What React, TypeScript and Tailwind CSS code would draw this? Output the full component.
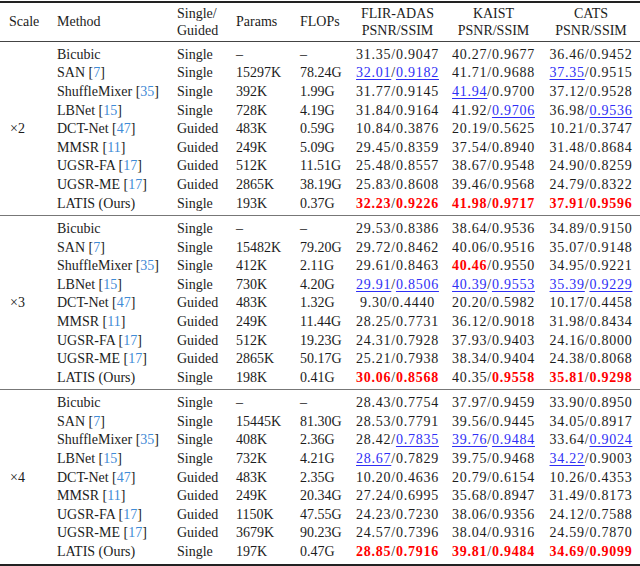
type Row = [string, string, string, string, string, string, string, string];

interface Group {
  scale: string;
  rows: Row[];
}

// metric cell markup: "*" = best (red bold), "_" = second best (blue underline)
const groups: Group[] = [
  {
    scale: '×2',
    rows: [
      ['Bicubic', '', 'Single', '–', '–', '31.35/0.9047', '40.27/0.9677', '36.46/0.9452'],
      ['SAN', '7', 'Single', '15297K', '78.24G', '_32.01/_0.9182', '41.71/0.9688', '_37.35/0.9515'],
      ['ShuffleMixer', '35', 'Single', '392K', '1.99G', '31.77/0.9145', '_41.94/0.9700', '37.12/0.9528'],
      ['LBNet', '15', 'Single', '728K', '4.19G', '31.84/0.9164', '41.92/_0.9706', '36.98/_0.9536'],
      ['DCT-Net', '47', 'Guided', '483K', '0.59G', '10.84/0.3876', '20.19/0.5625', '10.21/0.3747'],
      ['MMSR', '11', 'Guided', '249K', '5.09G', '29.45/0.8359', '37.54/0.8940', '31.48/0.8684'],
      ['UGSR-FA', '17', 'Guided', '512K', '11.51G', '25.48/0.8557', '38.67/0.9548', '24.90/0.8259'],
      ['UGSR-ME', '17', 'Guided', '2865K', '38.19G', '25.83/0.8608', '39.46/0.9568', '24.79/0.8322'],
      ['LATIS (Ours)', '', 'Single', '193K', '0.37G', '*32.23/*0.9226', '*41.98/*0.9717', '*37.91/*0.9596'],
    ],
  },
  {
    scale: '×3',
    rows: [
      ['Bicubic', '', 'Single', '–', '–', '29.53/0.8386', '38.64/0.9536', '34.89/0.9150'],
      ['SAN', '7', 'Single', '15482K', '79.20G', '29.72/0.8462', '40.06/0.9516', '35.07/0.9148'],
      ['ShuffleMixer', '35', 'Single', '412K', '2.11G', '29.61/0.8463', '*40.46/0.9550', '34.95/0.9221'],
      ['LBNet', '15', 'Single', '730K', '4.20G', '_29.91/_0.8506', '_40.39/_0.9553', '_35.39/_0.9229'],
      ['DCT-Net', '47', 'Guided', '483K', '1.32G', '9.30/0.4440', '20.20/0.5982', '10.17/0.4458'],
      ['MMSR', '11', 'Guided', '249K', '11.44G', '28.25/0.7731', '36.12/0.9018', '31.98/0.8434'],
      ['UGSR-FA', '17', 'Guided', '512K', '19.23G', '24.31/0.7928', '37.93/0.9403', '24.16/0.8000'],
      ['UGSR-ME', '17', 'Guided', '2865K', '50.17G', '25.21/0.7938', '38.34/0.9404', '24.38/0.8068'],
      ['LATIS (Ours)', '', 'Single', '198K', '0.41G', '*30.06/*0.8568', '40.35/*0.9558', '*35.81/*0.9298'],
    ],
  },
  {
    scale: '×4',
    rows: [
      ['Bicubic', '', 'Single', '–', '–', '28.43/0.7754', '37.97/0.9459', '33.90/0.8950'],
      ['SAN', '7', 'Single', '15445K', '81.30G', '28.53/0.7791', '39.56/0.9445', '34.05/0.8917'],
      ['ShuffleMixer', '35', 'Single', '408K', '2.36G', '28.42/_0.7835', '_39.76/_0.9484', '33.64/_0.9024'],
      ['LBNet', '15', 'Single', '732K', '4.21G', '_28.67/0.7829', '39.75/0.9468', '_34.22/0.9003'],
      ['DCT-Net', '47', 'Guided', '483K', '2.35G', '10.20/0.4636', '20.79/0.6154', '10.26/0.4353'],
      ['MMSR', '11', 'Guided', '249K', '20.34G', '27.24/0.6995', '35.68/0.8947', '31.49/0.8173'],
      ['UGSR-FA', '17', 'Guided', '1150K', '47.55G', '24.23/0.7230', '38.06/0.9356', '24.12/0.7588'],
      ['UGSR-ME', '17', 'Guided', '3679K', '90.23G', '24.57/0.7396', '38.04/0.9316', '24.59/0.7870'],
      ['LATIS (Ours)', '', 'Single', '197K', '0.47G', '*28.85/*0.7916', '*39.81/*0.9484', '*34.69/*0.9099'],
    ],
  },
];

function Num({ value }: { value: string }) {
  if (value.startsWith('*')) {
    return <span className="font-bold text-[#ff0000]">{value.slice(1)}</span>;
  }
  if (value.startsWith('_')) {
    return <span className="text-[#2f2ff5] underline decoration-1 underline-offset-2">{value.slice(1)}</span>;
  }
  return <span>{value}</span>;
}

function Metric({ value }: { value: string }) {
  const [psnr, ssim] = value.split('/');
  return (
    <div className="flex justify-center tracking-[0.75px]">
      <Num value={psnr} />
      <span>/</span>
      <Num value={ssim} />
    </div>
  );
}

function TableRow({ row }: { row: Row }) {
  const [method, cite, kind, params, flops, flir, kaist, cats] = row;
  return (
    <div className="flex h-[18.6px] items-center">
      <div className="w-[120px] whitespace-nowrap">
        {method}
        {cite ? (
          <>
            {' '}[<span className="text-[#3f8bd6]">{cite}</span>]
          </>
        ) : null}
      </div>
      <div className="w-[59px]">{kind}</div>
      <div className="w-[64px]">{params}</div>
      <div className="w-[50px]">{flops}</div>
      <div className="w-[95px]">
        <Metric value={flir} />
      </div>
      <div className="w-[97px]">
        <Metric value={kaist} />
      </div>
      <div className="w-[98px]">
        <Metric value={cats} />
      </div>
    </div>
  );
}

export default function App() {
  return (
    <div className="w-[640px] h-[566px] bg-white text-[14px] text-[#1c1c1c] font-['Liberation_Serif',serif] leading-none">
      <div className="pt-px">
        <div className="border-t-2 border-[#222]" />
        <div className="flex h-[39px] items-center border-b border-[#444] leading-[17.3px]">
          <div className="w-[57px] pl-[9px]">Scale</div>
          <div className="w-[120px]">Method</div>
          <div className="w-[59px]">
            Single/
            <br />
            Guided
          </div>
          <div className="w-[64px]">Params</div>
          <div className="w-[50px]">FLOPs</div>
          <div className="w-[95px] text-center">
            FLIR-ADAS
            <br />
            PSNR/SSIM
          </div>
          <div className="w-[97px] text-center">
            KAIST
            <br />
            PSNR/SSIM
          </div>
          <div className="w-[98px] text-center">
            CATS
            <br />
            PSNR/SSIM
          </div>
        </div>
        {groups.map((g, i) => (
          <div
            key={g.scale}
            className={
              i < groups.length - 1
                ? 'flex items-center pt-[3.5px] pb-[2.4px] border-b border-[#777]'
                : 'flex items-center pt-[3.5px] pb-[2.4px] border-b-2 border-[#222]'
            }
          >
            <div className="w-[57px] pl-[10px]">{g.scale}</div>
            <div className="flex flex-col">
              {g.rows.map((r) => (
                <TableRow key={r[0] + g.scale} row={r} />
              ))}
            </div>
          </div>
        ))}
      </div>
    </div>
  );
}
